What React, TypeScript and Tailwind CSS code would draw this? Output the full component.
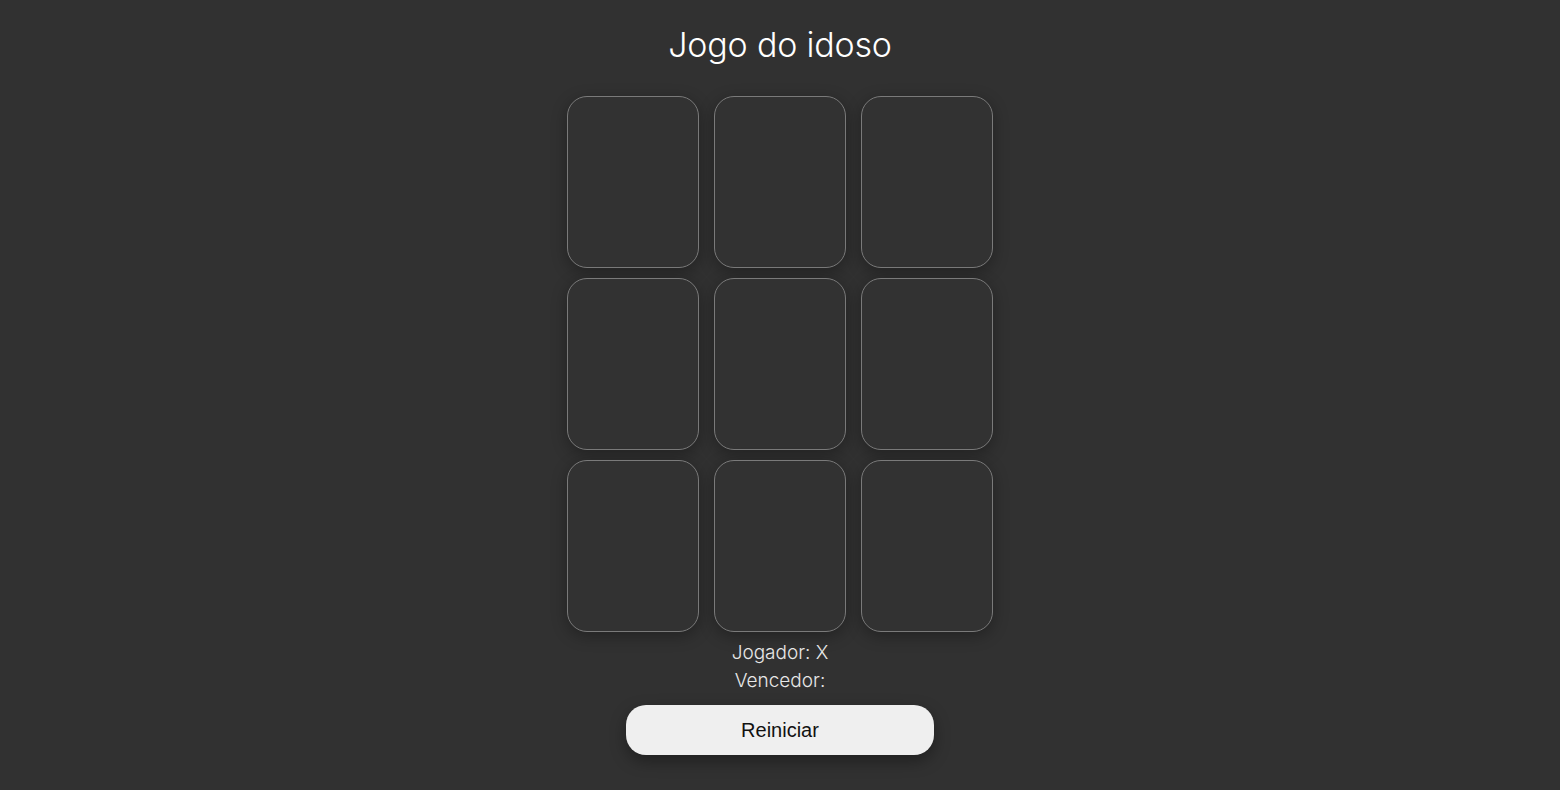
import React, { useState } from 'react';

const font = { fontFamily: '"Inter", "Lato", sans-serif' };

export default function App() {
  const [board, setBoard] = useState<(string | null)[]>(Array(9).fill(null));
  const [player, setPlayer] = useState('X');
  const [winner, setWinner] = useState('');

  const play = (i: number) => {
    if (board[i] || winner) return;
    const next = [...board];
    next[i] = player;
    setBoard(next);
    setPlayer(player === 'X' ? 'O' : 'X');
  };

  const reset = () => {
    setBoard(Array(9).fill(null));
    setPlayer('X');
    setWinner('');
  };

  return (
    <div
      className="flex min-h-[790px] w-full flex-col items-center bg-[#313131] text-white"
      style={font}
    >
      <h1 className="mt-[24px] text-[34px] font-light leading-[42px] tracking-[-0.2px]">
        Jogo do idoso
      </h1>

      <div className="mt-[30px] grid grid-cols-[132px_132px_132px] gap-x-[15px] gap-y-[10px]">
        {board.map((cell, i) => (
          <button
            key={i}
            onClick={() => play(i)}
            className="h-[172px] w-[132px] rounded-[20px] border border-[#7a7a7a] bg-[#323232] text-5xl text-white shadow-[0_4px_16px_rgba(0,0,0,0.3)]"
          >
            {cell}
          </button>
        ))}
      </div>

      <p className="mt-[7px] text-[19px] font-light leading-[28px] text-[#e8e8e8]">
        Jogador: {player}
      </p>
      <p className="text-[19px] font-light leading-[28px] text-[#e8e8e8]">
        Vencedor: {winner}
      </p>

      <button
        onClick={reset}
        className="mt-[10px] h-[50px] w-[308px] rounded-[20px] bg-[#efefef] text-[20px] text-[#111] shadow-[0_6px_16px_rgba(0,0,0,0.35)]"
        style={{ fontFamily: '"Liberation Sans", Arial, sans-serif' }}
      >
        Reiniciar
      </button>
    </div>
  );
}
